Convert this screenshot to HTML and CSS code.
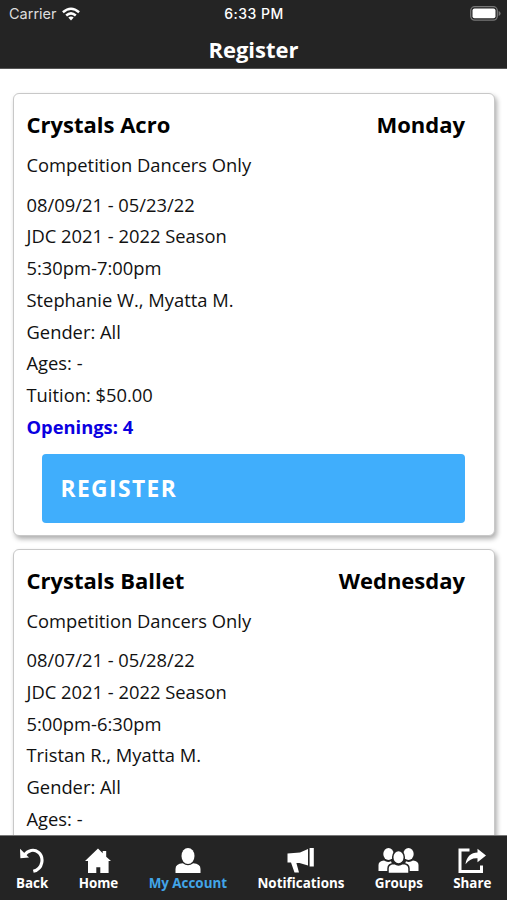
FILE: index.html
```html
<!DOCTYPE html>
<html lang="en">
<head>
<meta charset="utf-8">
<title>Register</title>
<link rel="stylesheet" href="styles.css">
</head>
<body>
<header class="header">
  <div class="status">
    <div class="carrier"><span>Carrier</span>
      <svg class="wifi" viewBox="0 0 18 14"><path fill="none" stroke="#fff" stroke-width="2.5" d="M.9 5.2Q9-1.8 17.1 5.2M4.2 8.5Q9 4.2 13.8 8.5"/><path fill="#fff" d="M6.3 10.6Q9 8.4 11.7 10.6L9 13.6z"/></svg>
    </div>
    <span class="time">6:33 PM</span>
    <svg class="battery" viewBox="0 0 31 15"><rect x=".7" y=".7" width="26.6" height="13.4" rx="4" fill="none" stroke="#777" stroke-width="1.3"/><rect x="2.5" y="2.5" width="23" height="9.8" rx="2" fill="#fff"/><path d="M28.6 5v5q2-.8 2-2.5T28.6 5z" fill="#777"/></svg>
  </div>
  <h1 class="title">Register</h1>
</header>
<main class="list">
  <article class="card">
    <div class="card-head"><h2 class="name">Crystals Acro</h2><h2 class="day">Monday</h2></div>
    <p class="desc">Competition Dancers Only</p>
    <ul class="details">
      <li>08/09/21 - 05/23/22</li>
      <li>JDC 2021 - 2022 Season</li>
      <li>5:30pm-7:00pm</li>
      <li>Stephanie W., Myatta M.</li>
      <li>Gender: All</li>
      <li>Ages: -</li>
      <li>Tuition: $50.00</li>
      <li class="openings">Openings: 4</li>
    </ul>
    <button class="register">REGISTER</button>
  </article>
  <article class="card">
    <div class="card-head"><h2 class="name">Crystals Ballet</h2><h2 class="day">Wednesday</h2></div>
    <p class="desc">Competition Dancers Only</p>
    <ul class="details">
      <li>08/07/21 - 05/28/22</li>
      <li>JDC 2021 - 2022 Season</li>
      <li>5:00pm-6:30pm</li>
      <li>Tristan R., Myatta M.</li>
      <li>Gender: All</li>
      <li>Ages: -</li>
    </ul>
  </article>
</main>
<nav class="tabs">
  <a class="tab"><svg width="26" height="26" viewBox="0 0 26 26"><path fill="none" stroke="#fff" stroke-width="3.1" d="M5.2 7.3C9 1.8 15.2.9 19.3 4.2C25.2 9 24.3 20.8 14.3 23.3"/><path fill="#fff" d="M1 .8L1.4 10.2L10 9.4z"/></svg><span>Back</span></a>
  <a class="tab"><svg width="26" height="26" viewBox="0 0 26 26"><path fill="#fff" d="M13 .5L17.7 5.3V3H21.2V8.8L26 13H23.6V25H15.3V19.2H11.3V25H3V13H0z"/></svg><span>Home</span></a>
  <a class="tab active"><svg width="26" height="26" viewBox="0 0 26 26"><ellipse cx="13" cy="8" rx="6.5" ry="8" fill="#fff"/><path fill="#fff" d="M.5 25V21Q.5 15.7 7.8 15.3Q13 19.4 18.2 15.3Q25.5 15.7 25.5 21V25z"/></svg><span>My Account</span></a>
  <a class="tab"><svg width="27" height="26" viewBox="0 0 27 26"><path fill="#fff" d="M.5 5.5L13 4.4L21 .9V17.6L12.5 14.9H9.4L12 24.5H7.5L4 14.5H.5zM22.6 0H26.8V18.5H22.6z"/></svg><span>Notifications</span></a>
  <a class="tab"><svg width="41" height="26" viewBox="0 0 41 26"><g fill="#fff"><ellipse cx="10.5" cy="6" rx="5.2" ry="6"/><ellipse cx="30.5" cy="6" rx="5.2" ry="6"/><path d="M.5 23V17Q.5 13.2 6 12.5Q9.5 15 13 13.3L16 21V23zM40.5 23V17Q40.5 13.2 35 12.5Q31.5 15 28 13.3L25 21V23z"/></g><g fill="#fff" stroke="#242424" stroke-width="1.5"><path d="M10 25.5V20.5Q10 15.8 16.5 15.5Q20.5 18.7 24.5 15.5Q31 15.8 31 20.5V25.5z"/><ellipse cx="20.5" cy="9.2" rx="5.8" ry="6.8"/></g></svg><span>Groups</span></a>
  <a class="tab"><svg width="28" height="26" viewBox="0 0 28 26"><path fill="none" stroke="#fff" stroke-width="3" d="M11.5 2H2V23.5H23.5V17.5"/><path fill="#fff" d="M7.5 16.2C8.5 8.4 13 4.4 19.5 4.4V.8L28 7.5L19.5 14.2V10.2C14.8 9.8 11.2 11.7 7.5 16.2z"/></svg><span>Share</span></a>
</nav>
</body>
</html>
```
FILE: styles.css
```css
* { box-sizing: border-box; margin: 0; padding: 0; }
body {
  width: 507px; height: 900px; overflow: hidden;
  display: flex; flex-direction: column;
  background: #fff; color: #111;
  font-family: "Open Sans", "Noto Sans", sans-serif;
}
.header { flex: none; height: 69px; background: #242424; border-bottom: 1px solid #555; color: #fff; }
.status {
  display: grid; grid-template-columns: 1fr auto 1fr; align-items: center;
  height: 27px; padding: 0 6px 0 9px;
  font: 14.5px/27px Inter, "Liberation Sans", sans-serif;
}
.carrier { display: flex; align-items: center; gap: 5px; color: #ddd; }
.wifi { width: 18px; height: 14px; }
.time { font-weight: 500; font-size: 14px; letter-spacing: .5px; margin-right: 2px; }
.battery { width: 31px; height: 15px; justify-self: end; }
.title { font-size: 22px; line-height: 44px; font-weight: 700; text-align: center; }
.list {
  flex: 1; min-height: 0; overflow: hidden; padding: 24px 12px 0 13px;
  display: flex; flex-direction: column; gap: 12.5px;
}
.card {
  flex: none; height: 443px; padding: 11px 29px 0 12.5px;
  background: #fff; border: 1.5px solid #c8c8c8; border-radius: 6px;
  box-shadow: 2px 3px 5px rgba(0, 0, 0, .32);
}
.card-head { display: flex; justify-content: space-between; color: #000; }
.name, .day { font-size: 22px; line-height: 38px; font-weight: 700; }
.desc { font-size: 18.35px; line-height: 32px; margin-top: 6px; }
.details { list-style: none; margin-top: 7.5px; font-size: 18.35px; line-height: 31.75px; }
.openings { color: #0a00e0; font-weight: 700; }
.register {
  display: block; width: 423px; height: 69px; margin: 11px 0 0 15.5px; padding-left: 18.5px;
  border: 0; border-radius: 4px; background: #40aefc; color: #fff;
  font: 700 22.8px/69px "Open Sans", sans-serif; letter-spacing: 1.4px; text-align: left;
}
.tabs {
  flex: none; height: 65px; padding: 12px 15.5px 0 16px;
  display: flex; justify-content: space-between;
  background: #242424; border-top: 1px solid #777; color: #fff;
  font-size: 13.4px; line-height: 18px; font-weight: 700;
}
.tab { display: flex; flex-direction: column; align-items: center; }
.tab svg { display: block; }
.active span { color: #42a5e8; }
```
